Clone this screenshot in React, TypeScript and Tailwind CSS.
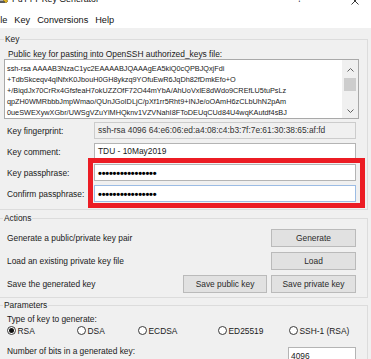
import React from "react";

const keyLines = [
  "ssh-rsa AAAAB3NzaC1yc2EAAAABJQAAAgEA5kiQ0cQPBJQxjFdi",
  "+TdbSkceqv4qlNfxK0JbouH0GH8ykzq9YOfuEwR6JqDh82fDmkEfo+O",
  "+/BiqdJx70CrRx4GfsfeaH7okUZZOfF72O44mYbA/AhUoVxlE8dWdo9CREfLU5tuPsLz",
  "qpZH0WMRbbbJmpWmao/QUnJGoIDLjC/pXf1rr5Rht9+INJe/oOAmH6zCLbUhN2pAm",
  "0ueSWEXywXGbr/UWSgVZuYlMHQknv1VZVNahI8FToDEUqCUd84U4wqKAutdf4sBJ",
];

const dots = "•".repeat(16);

const Chevron = ({ up }: { up?: boolean }) => (
  <svg width="7" height="4" viewBox="0 0 7 4">
    <polyline
      points={up ? "0.5,3.5 3.5,0.5 6.5,3.5" : "0.5,0.5 3.5,3.5 6.5,0.5"}
      fill="none"
      stroke="#606060"
      strokeWidth="1"
    />
  </svg>
);

const Field = ({
  label,
  children,
  className,
}: {
  label: string;
  children: React.ReactNode;
  className: string;
}) => (
  <div className="flex items-center h-[17px]">
    <div className="w-[94px] pl-[7px] leading-[10px]">{label}</div>
    <div className={`w-[262px] h-[17px] border flex items-center pl-[3px] overflow-hidden whitespace-nowrap ${className}`}>
      {children}
    </div>
  </div>
);

const Btn = ({ label, w }: { label: string; w: string }) => (
  <button className={`${w} h-[18px] bg-[#e1e1e1] border border-[#bababa] text-[#2a2a2a] leading-[10px] flex items-center justify-center`}>
    {label}
  </button>
);

const Radio = ({ label, checked, w }: { label: string; checked?: boolean; w?: string }) => (
  <div className={`flex items-center ${w ?? ""}`}>
    <span className="w-[9px] h-[9px] rounded-full border border-[#3a3a3a] bg-white flex items-center justify-center">
      {checked && <span className="w-[4.5px] h-[4.5px] rounded-full bg-[#111]" />}
    </span>
    <span className="ml-[1.5px] leading-[10px]">{label}</span>
  </div>
);

const App = () => {
  return (
    <div className="relative w-[371px] h-[359px] overflow-hidden bg-[#f0f0f0] text-[#1a1a1a] text-[8.4px] font-['Liberation_Sans',Arial,sans-serif]">
      {/* title bar, cut at the top */}
      <div className="h-[14px] bg-white overflow-hidden">
        <div className="flex items-center h-[20px] -mt-[10px] text-[8.8px] text-[#111]">
          <svg width="10" height="12" viewBox="0 0 10 12" className="ml-[-1px]">
            <rect x="0.5" y="1" width="6" height="5" fill="#9aa3ad" stroke="#3c3c3c" strokeWidth="0.8" />
            <rect x="1" y="7" width="5" height="2" fill="#5a5a5a" />
            <path d="M5 4 L9 7 L7 9 L4 6 Z" fill="#e2b21b" stroke="#6b5200" strokeWidth="0.5" />
          </svg>
          <span className="ml-[3px]">PuTTY Key Generator</span>
          <span className="ml-auto mr-[49px] text-[9px] text-[#333]">?</span>
          <svg width="8" height="8" viewBox="0 0 8 8" className="mr-[12px] mt-[2px]">
            <path d="M0.5 0.5 L7.5 7.5 M7.5 0.5 L0.5 7.5" stroke="#222" strokeWidth="0.9" />
          </svg>
        </div>
      </div>

      {/* menu bar */}
      <div className="h-[14px] bg-white flex items-center gap-[7px] -ml-[7.5px] text-[9.2px] text-[#111]">
        <span>File</span>
        <span>Key</span>
        <span>Conversions</span>
        <span>Help</span>
      </div>

      {/* Key group */}
      <fieldset className="mt-[6px] w-[368px] border border-l-0 border-[#dcdcdc] pb-[7px]">
        <legend className="ml-[4px] px-[1px] leading-[10px]">Key</legend>
        <div className="mt-[5px] pl-[8px] leading-[10px]">
          Public key for pasting into OpenSSH authorized_keys file:
        </div>
        <div className="ml-[4px] w-[355px] h-[60px] border border-[#a9a9a9] bg-white flex">
          <div className="flex-1 overflow-hidden pl-[2px] pt-[3px] text-[7.3px] leading-[11.1px] whitespace-nowrap">
            {keyLines.map((line) => (
              <div key={line}>{line}</div>
            ))}
          </div>
          <div className="w-[16px] bg-[#f0f0f0] flex flex-col">
            <div className="h-[16px] flex items-center justify-center pt-[3px]">
              <Chevron up />
            </div>
            <div className="flex-1 px-[2px] pt-[2px]">
              <div className="h-[13px] bg-[#cdcdcd]" />
            </div>
            <div className="h-[14px] flex items-center justify-center">
              <Chevron />
            </div>
          </div>
        </div>

        <div className="mt-[3px] flex flex-col gap-[4px]">
          <Field label="Key fingerprint:" className="border-[#cccccc] bg-[#f0f0f0] text-[#333]">
            ssh-rsa 4096 64:e6:06:ed:a4:08:c4:b3:7f:7e:61:30:38:65:af:fd
          </Field>
          <Field label="Key comment:" className="border-[#b4b4b4] bg-white">
            TDU - 10May2019
          </Field>
          <Field label="Key passphrase:" className="border-[#b4b4b4] bg-white">
            <span className="text-[11px] font-bold leading-[10px] tracking-[-0.2px] text-black">{dots}</span>
          </Field>
          <Field label="Confirm passphrase:" className="border-[#9cbce4] bg-white">
            <span className="text-[11px] font-bold leading-[10px] tracking-[-0.2px] text-black">{dots}</span>
          </Field>
        </div>
      </fieldset>

      {/* Actions group */}
      <fieldset className="mt-[3px] w-[368px] border border-l-0 border-[#dcdcdc] pb-[4px]">
        <legend className="ml-[3px] px-[1px] leading-[10px]">Actions</legend>
        <div className="mt-[6px] flex flex-col gap-[5px] pr-[11px]">
          <div className="flex items-center">
            <span className="flex-1 pl-[7px] leading-[10px]">Generate a public/private key pair</span>
            <Btn label="Generate" w="w-[85px]" />
          </div>
          <div className="flex items-center">
            <span className="flex-1 pl-[7px] leading-[10px]">Load an existing private key file</span>
            <Btn label="Load" w="w-[85px]" />
          </div>
          <div className="flex items-center gap-[4px]">
            <span className="flex-1 pl-[7px] leading-[10px]">Save the generated key</span>
            <Btn label="Save public key" w="w-[84px]" />
            <Btn label="Save private key" w="w-[85px]" />
          </div>
        </div>
      </fieldset>

      {/* Parameters group */}
      <fieldset className="mt-[2px] w-[368px] border border-l-0 border-b-0 border-[#dcdcdc]">
        <legend className="ml-[3px] px-[1px] leading-[10px]">Parameters</legend>
        <div className="mt-[3.5px] pl-[7px] leading-[10px]">Type of key to generate:</div>
        <div className="mt-[2px] pl-[7px] flex items-center h-[10px]">
          <Radio label="RSA" checked w="w-[70px]" />
          <Radio label="DSA" w="w-[61px]" />
          <Radio label="ECDSA" w="w-[80px]" />
          <Radio label="ED25519" w="w-[71px]" />
          <Radio label="SSH-1 (RSA)" />
        </div>
        <div className="mt-[10.5px] flex items-start">
          <span className="flex-1 pl-[7px] leading-[10px]">Number of bits in a generated key:</span>
          <div className="mt-[1px] mr-[11px] w-[68px] h-[17px] border border-[#b4b4b4] bg-white flex items-center pl-[2px] leading-[10px]">
            4096
          </div>
        </div>
      </fieldset>

      {/* red annotation box over the passphrase fields */}
      <div className="absolute left-[88px] top-[158px] w-[277px] h-[50px] border-[5px] border-[#ec1c24] pointer-events-none" />
    </div>
  );
};

export default App;
